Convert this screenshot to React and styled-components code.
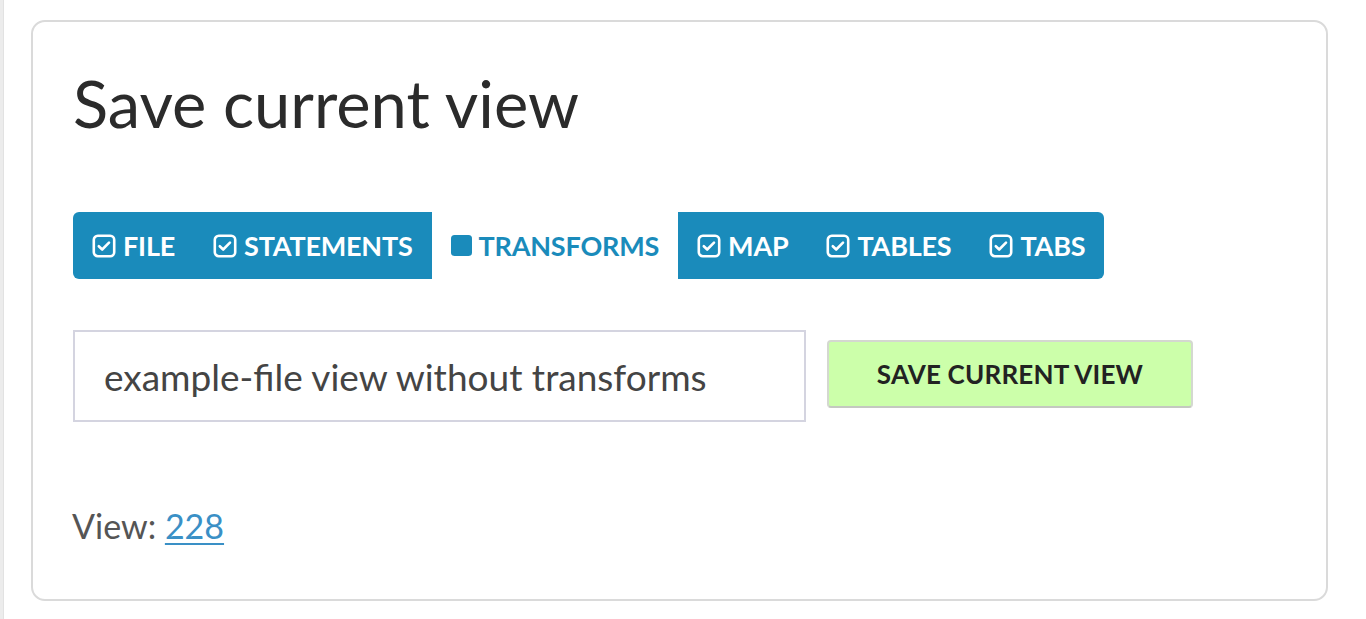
import React from "react";
import styled, { createGlobalStyle } from "styled-components";

const GlobalStyle = createGlobalStyle`
  html, body { margin: 0; padding: 0; background: #fff; }
  body { font-family: Lato, "Open Sans", sans-serif; }
  * { box-sizing: border-box; }
`;

const Page = styled.div`
  display: flex;
  align-items: flex-start;
  height: 619px;
  overflow: hidden;
`;

const EdgeStrip = styled.div`
  width: 4px;
  align-self: stretch;
  background: #ececec;
  border-right: 1px solid #e2e2e2;
`;

const Card = styled.section`
  margin: 20px 0 0 27px;
  width: 1297px;
  height: 581px;
  border: 2px solid #dadada;
  border-radius: 14px;
  padding: 0 40px;
  display: flex;
  flex-direction: column;
  align-items: flex-start;
`;

const Title = styled.h1`
  margin: 42px 0 0 0;
  font-family: Lato, sans-serif;
  font-weight: 400;
  font-size: 65px;
  line-height: 1.2;
  color: #2b2b2b;
`;

const Tabs = styled.div`
  margin-top: 70px;
  display: flex;
  height: 67px;
`;

const Group = styled.div`
  display: flex;
  align-items: stretch;
  background: ${(p) => (p.$on ? "#1a8bbb" : "#fff")};
  color: ${(p) => (p.$on ? "#fff" : "#1a8bbb")};
  border-radius: ${(p) => p.$radius || "0"};
`;

const Tab = styled.div`
  display: flex;
  align-items: center;
  gap: 7px;
  padding: 0 19px;
  font-family: Lato, sans-serif;
  font-weight: 700;
  font-size: 27px;
  letter-spacing: -0.2px;
  line-height: 1;
`;

const Row = styled.div`
  margin-top: 51px;
  display: flex;
  align-items: center;
  gap: 21px;
`;

const NameInput = styled.input`
  width: 733px;
  height: 92px;
  border: 2px solid #d4d4e0;
  padding: 0 0 0 29px;
  font-family: Lato, sans-serif;
  font-size: 37px;
  color: #444;
  background: #fff;
  outline: none;
`;

const SaveButton = styled.button`
  width: 366px;
  height: 68px;
  margin-top: -4px;
  background: #ccffaa;
  border: 2px solid #d4d8d0;
  border-bottom-color: #c4c8c0;
  border-radius: 4px;
  font-family: Lato, sans-serif;
  font-weight: 700;
  font-size: 26px;
  letter-spacing: 0.2px;
  color: #222;
  cursor: pointer;
`;

const Footer = styled.p`
  margin: 84px 0 0 -1px;
  font-family: Lato, sans-serif;
  font-size: 34px;
  line-height: 1.2;
  color: #555;
`;

const ViewLink = styled.a`
  color: #3a90c6;
  text-decoration: underline;
  text-underline-offset: 4px;
  text-decoration-thickness: 2px;
`;

const CheckIcon = () => (
  <svg width="24" height="24" viewBox="0 0 24 24" fill="none">
    <rect x="1.8" y="1.8" width="20.4" height="20.4" rx="4" stroke="currentColor" strokeWidth="2.6" />
    <path d="M6.8 12.2l3.4 3.3 6.8-6.8" stroke="currentColor" strokeWidth="2.6" strokeLinecap="round" strokeLinejoin="round" />
  </svg>
);

const SquareIcon = () => (
  <svg width="21" height="21" viewBox="0 0 21 21">
    <rect x="0" y="0" width="21" height="21" rx="3.5" fill="currentColor" />
  </svg>
);

export default function App() {
  return (
    <>
      <GlobalStyle />
      <Page>
        <EdgeStrip />
        <Card>
          <Title>Save current view</Title>
          <Tabs>
            <Group $on $radius="6px 0 0 6px">
              <Tab><CheckIcon />FILE</Tab>
              <Tab><CheckIcon />STATEMENTS</Tab>
            </Group>
            <Group>
              <Tab><SquareIcon />TRANSFORMS</Tab>
            </Group>
            <Group $on $radius="0 6px 6px 0">
              <Tab><CheckIcon />MAP</Tab>
              <Tab><CheckIcon />TABLES</Tab>
              <Tab><CheckIcon />TABS</Tab>
            </Group>
          </Tabs>
          <Row>
            <NameInput defaultValue="example-file view without transforms" />
            <SaveButton>SAVE CURRENT VIEW</SaveButton>
          </Row>
          <Footer>
            View: <ViewLink href="#">228</ViewLink>
          </Footer>
        </Card>
      </Page>
    </>
  );
}
